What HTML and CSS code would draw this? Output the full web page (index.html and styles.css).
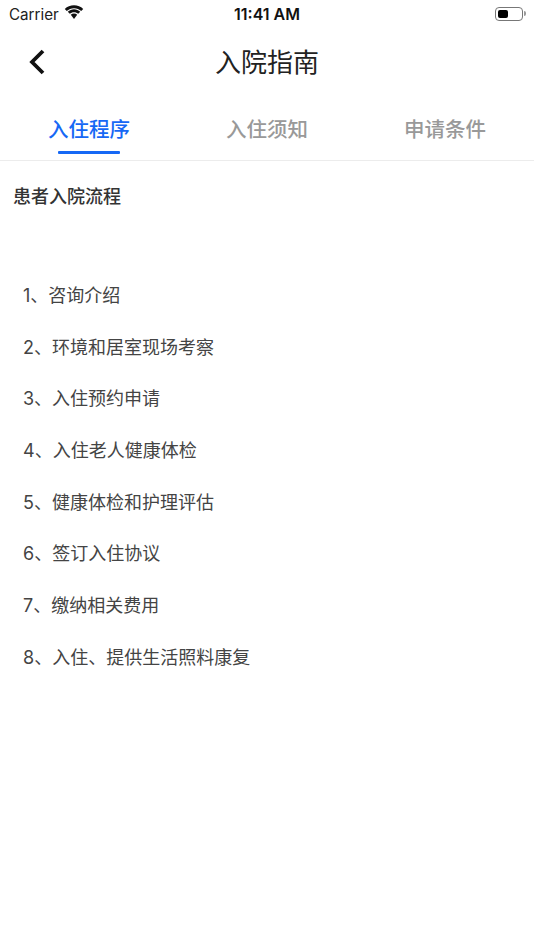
FILE: index.html
```html
<!DOCTYPE html>
<html lang="zh-CN">
<head>
<meta charset="utf-8">
<title>入院指南</title>
<link rel="stylesheet" href="styles.css">
</head>
<body>
<div class="status">
  <div class="status-left">
    <span class="carrier">Carrier</span>
    <svg class="wifi" width="20" height="15" viewBox="0 0 18 13"><path d="M9 2.600c2.500 0 4.800 1 6.500 2.600l1.800-1.900C15.100 1.200 12.200 0 9 0S2.900 1.200.7 3.300l1.800 1.900C4.200 3.600 6.500 2.600 9 2.600z" fill="#111"/><path d="M9 6.300c1.500 0 2.800.5 3.800 1.400l1.800-1.900C13.100 4.400 11.100 3.600 9 3.600s-4.100.8-5.600 2.200l1.800 1.900c1-.9 2.300-1.400 3.800-1.400z" fill="#111"/><path d="M9 7.500c-1.100 0-2.100.4-2.900 1.100L9 12.400l2.900-3.800C11.100 7.900 10.100 7.500 9 7.500z" fill="#111"/></svg>
  </div>
  <span class="time">11:41 AM</span>
  <div class="battery"><div class="battery-body"><div class="battery-fill"></div></div><div class="battery-cap"></div></div>
</div>
<header class="nav">
  <svg class="back" width="16" height="26" viewBox="0 0 16 26"><path d="M14 2 3 13l11 11" fill="none" stroke="#111" stroke-width="3.800"/></svg>
  <h1 class="nav-title">入院指南</h1>
</header>
<nav class="tabs">
  <div class="tab active">入住程序<span class="tab-bar"></span></div>
  <div class="tab">入住须知</div>
  <div class="tab">申请条件</div>
</nav>
<main class="content">
  <h2 class="heading">患者入院流程</h2>
  <ol class="steps">
    <li>1、咨询介绍</li>
    <li>2、环境和居室现场考察</li>
    <li>3、入住预约申请</li>
    <li>4、入住老人健康体检</li>
    <li>5、健康体检和护理评估</li>
    <li>6、签订入住协议</li>
    <li>7、缴纳相关费用</li>
    <li>8、入住、提供生活照料康复</li>
  </ol>
</main>
</body>
</html>
```
FILE: styles.css
```css
* { box-sizing: border-box; margin: 0; padding: 0; }
html, body { width: 534px; height: 950px; background: #fff; overflow: hidden; }
body { font-family: "Inter", "Noto Sans CJK SC", sans-serif; color: #333; }
.status { height: 28px; padding: 0 7px 0 9px; display: flex; align-items: center; justify-content: space-between; position: relative; }
.status-left { display: flex; align-items: center; gap: 5px; }
.carrier { font-size: 15.200px; color: #222; }
.wifi { display: block; margin-top: -3px; }
.time { position: absolute; left: 0; right: 0; text-align: center; font-size: 16px; font-weight: 600; color: #111; }
.battery { display: flex; align-items: center; gap: 1px; margin-top: -1px; margin-right: 1px; }
.battery-body { width: 28px; height: 14px; border: 1px solid #777; border-radius: 4px; padding: 2px; }
.battery-fill { width: 10px; height: 100%; background: #000; border-radius: 2px; }
.battery-cap { width: 2px; height: 5px; background: #999; border-radius: 0 2px 2px 0; }
.nav { height: 68px; display: flex; align-items: center; justify-content: center; position: relative; }
.back { position: absolute; left: 29px; top: 21px; }
.nav-title { font-size: 26px; font-weight: 400; color: #222; font-family: "Noto Sans CJK SC", sans-serif; line-height: 1; margin-top: -3px; }
.tabs { height: 65px; display: grid; grid-template-columns: 178px 178px 178px; border-bottom: 1px solid #ececec; }
.tab { position: relative; text-align: center; font-size: 20.500px; font-weight: 500; color: #999; padding-top: 17px; line-height: 30px; font-family: "Noto Sans CJK SC", sans-serif; }
.tab.active { color: #1668f5; }
.tab-bar { position: absolute; left: 58px; width: 62px; height: 3px; top: 55px; background: #1668f5; border-radius: 1px; }
.content { padding: 20px 13px 0; }
.heading { font-size: 18px; font-weight: 500; color: #333; line-height: 28px; font-family: "Noto Sans CJK SC", sans-serif; }
.steps { list-style: none; padding: 74px 0 0 10px; }
.steps li { font-size: 18px; line-height: 26px; margin-bottom: 25.700px; color: #444; font-family: "Inter", "Noto Sans CJK SC", sans-serif; }
```
